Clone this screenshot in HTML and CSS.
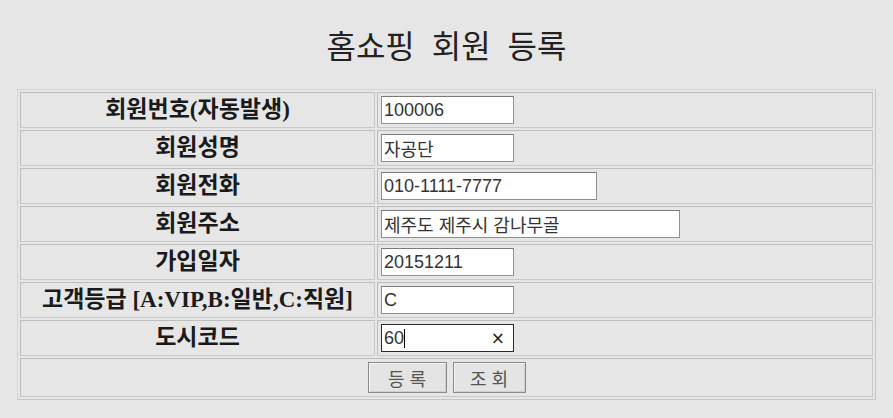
FILE: index.html
```html
<!DOCTYPE html>
<html lang="ko">
<head>
<meta charset="utf-8">
<title>홈쇼핑 회원 등록</title>
<link rel="stylesheet" href="styles.css">
</head>
<body>
<h2 class="title">홈쇼핑 회원 등록</h2>
<form class="form">
<table class="grid">
<tr>
<td class="label">회원번호(자동발생)</td>
<td class="field"><input class="inp w-s" type="text" value="100006"></td>
</tr>
<tr>
<td class="label">회원성명</td>
<td class="field"><input class="inp w-s" type="text" value="자공단"></td>
</tr>
<tr>
<td class="label">회원전화</td>
<td class="field"><input class="inp w-m" type="text" value="010-1111-7777"></td>
</tr>
<tr>
<td class="label">회원주소</td>
<td class="field"><input class="inp w-l" type="text" value="제주도 제주시 감나무골"></td>
</tr>
<tr>
<td class="label">가입일자</td>
<td class="field"><input class="inp w-s" type="text" value="20151211"></td>
</tr>
<tr>
<td class="label">고객등급 [A:VIP,B:일반,C:직원]</td>
<td class="field"><input class="inp w-s" type="text" value="C"></td>
</tr>
<tr>
<td class="label">도시코드</td>
<td class="field"><span class="clearable"><input class="inp w-s focus" type="text" value="60"><span class="caret"></span><span class="clear">×</span></span></td>
</tr>
<tr>
<td class="actions" colspan="2"><button type="button" class="btn btn-reg">등 록</button><button type="button" class="btn btn-view">조 회</button></td>
</tr>
</table>
</form>
</body>
</html>
```
FILE: styles.css
```css
html, body {
  margin: 0;
  padding: 0;
  background: #e6e6e6;
}
body {
  font-family: "Liberation Serif", "Noto Sans CJK KR", serif;
  color: #1a1a1a;
}
.title {
  margin: 24px 0 25px;
  height: 40px;
  line-height: 40px;
  text-align: center;
  font-family: "Noto Sans CJK KR", sans-serif;
  font-weight: 400;
  font-size: 32px;
  word-spacing: 8px;
  color: #222;
}
.form {
  margin: 0;
}
.grid {
  width: 859px;
  margin: 0 auto;
  border-collapse: separate;
  border-spacing: 2px;
  border: 1px solid #c6c6c6;
  border-top-color: #d4d4d4;
  border-left-color: #d4d4d4;
}
.grid td {
  border: 1px solid #c9c9c9;
  border-top-color: #bdbdbd;
  border-left-color: #bdbdbd;
  height: 28px;
  padding: 3px;
}
.label {
  width: 347px;
  text-align: center;
  vertical-align: middle;
  font-size: 23px;
  font-weight: 700;
  line-height: 28px;
  white-space: nowrap;
}
.field {
  vertical-align: middle;
  padding-left: 3px;
}
.inp {
  display: block;
  box-sizing: border-box;
  height: 28px;
  margin: 0;
  padding: 0 2px;
  border: 1px solid #8f8f8f;
  border-top-color: #7a7a7a;
  background: #fff;
  font-family: "Liberation Sans", "Noto Sans CJK KR", sans-serif;
  font-size: 18px;
  color: #333;
  outline: none;
}
.w-s { width: 133px; }
.w-m { width: 216px; }
.w-l { width: 299px; }
.focus {
  border-color: #2b2b2b;
}
.clearable {
  position: relative;
  display: block;
  width: 133px;
}
.caret {
  position: absolute;
  left: 23px;
  top: 5px;
  width: 1px;
  height: 19px;
  background: #000;
}
.clear {
  position: absolute;
  right: 9px;
  top: 3px;
  font-family: "DejaVu Sans", sans-serif;
  font-size: 17px;
  line-height: 22px;
  color: #222;
}
.actions {
  text-align: center;
  vertical-align: middle;
}
.grid td.actions {
  height: 31px;
  padding: 3px 0;
}
.btn {
  box-sizing: border-box;
  height: 31px;
  margin: 0 3px;
  padding: 0;
  border: 1px solid #8a8a8a;
  box-shadow: inset 1px 1px 0 #f4f4f4, inset -1px -1px 0 #cfcfcf;
  background: #e4e4e4;
  font-family: "Noto Sans CJK KR", sans-serif;
  font-size: 18px;
  color: #555;
  vertical-align: middle;
}
.btn-reg { width: 79px; }
.btn-view { width: 73px; }
```
